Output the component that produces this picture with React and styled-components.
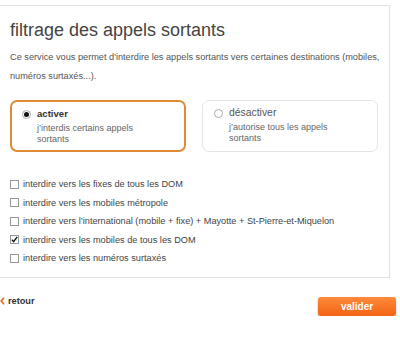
import React, { useState } from 'react';
import styled, { createGlobalStyle } from 'styled-components';

const Global = createGlobalStyle`
    body {
        margin: 0;
        background: #fff;
        font-family: "Liberation Sans", Arial, sans-serif;
        color: #444;
    }
`;

const Panel = styled.div`
    margin-top: 5px;
    width: 390px;
    height: 273px;
    border: 1px solid #e2e2e2;
    border-left: none;
    padding: 12px 0 0 10px;
    box-sizing: border-box;
`;

const Title = styled.h1`
    margin: 0;
    font-size: 18px;
    font-weight: normal;
    line-height: 24px;
    color: #444;
`;

const Intro = styled.p`
    margin: 6px 0 0;
    font-size: 9.2px;
    line-height: 19px;
    color: #555;
    width: 378px;
`;

const Choices = styled.div`
    display: flex;
    gap: 16px;
    margin-top: 14px;
`;

const Choice = styled.label`
    width: 176px;
    height: 52px;
    box-sizing: border-box;
    border: ${p => (p.$on ? '2px solid #e08a35' : '1px solid #e4e4e4')};
    border-radius: 7px;
    padding: ${p => (p.$on ? '5px 10px' : '5px 11px')};
    display: flex;
    gap: 6px;
    cursor: pointer;
`;

const Radio = styled.span`
    flex: none;
    width: 9px;
    height: 9px;
    margin-top: 3px;
    border-radius: 50%;
    border: 1px solid #aaa;
    box-sizing: border-box;
    display: flex;
    align-items: center;
    justify-content: center;
    &::after {
        content: '';
        width: 5px;
        height: 5px;
        border-radius: 50%;
        background: ${p => (p.$on ? '#111' : 'transparent')};
    }
`;

const ChoiceText = styled.div`
    display: flex;
    flex-direction: column;
`;

const ChoiceName = styled.span`
    font-size: ${p => (p.$on ? '9.6px' : '10.4px')};
    line-height: 14px;
    font-weight: ${p => (p.$on ? 'bold' : 'normal')};
    color: ${p => (p.$on ? '#333' : '#555')};
`;

const ChoiceDesc = styled.span`
    margin-top: 2px;
    font-size: 9px;
    line-height: 11px;
    color: #666;
    width: 110px;
`;

const Options = styled.ul`
    list-style: none;
    margin: 26px 0 0;
    padding: 0;
    display: flex;
    flex-direction: column;
    gap: 6.5px;
`;

const Option = styled.li`
    display: flex;
    align-items: center;
    gap: 4px;
    font-size: 9.2px;
    line-height: 12px;
    color: #444;
    cursor: pointer;
`;

const Box = styled.span`
    width: 9px;
    height: 9px;
    border: 1px solid #999;
    box-sizing: border-box;
    display: flex;
    align-items: center;
    justify-content: center;
`;

const Footer = styled.div`
    display: flex;
    justify-content: space-between;
    align-items: flex-start;
    width: 396px;
    margin-top: 18px;
`;

const Back = styled.a`
    display: flex;
    align-items: center;
    gap: 3px;
    font-size: 9.2px;
    font-weight: bold;
    color: #333;
    text-decoration: none;
    cursor: pointer;
`;

const Validate = styled.button`
    width: 78px;
    height: 19px;
    margin-top: 1px;
    border: none;
    border-radius: 3px;
    background: linear-gradient(#ff8a3a, #f26414);
    box-shadow: 0 1px 2px rgba(0, 0, 0, 0.35);
    color: #fff;
    font-family: inherit;
    font-size: 10px;
    font-weight: bold;
    padding: 0;
    cursor: pointer;
`;

const options = [
    'interdire vers les fixes de tous les DOM',
    'interdire vers les mobiles métropole',
    'interdire vers l\u2019international (mobile + fixe) + Mayotte + St-Pierre-et-Miquelon',
    'interdire vers les mobiles de tous les DOM',
    'interdire vers les numéros surtaxés',
];

const choices = [
    { name: 'activer', desc: 'j\u2019interdis certains appels sortants' },
    { name: 'désactiver', desc: 'j\u2019autorise tous les appels sortants' },
];

function App() {
    const [active, setActive] = useState(0);
    const [checked, setChecked] = useState([false, false, false, true, false]);

    const toggle = i => setChecked(checked.map((c, j) => (j === i ? !c : c)));

    return (
        <>
            <Global />
            <Panel>
                <Title>filtrage des appels sortants</Title>
                <Intro>
                    Ce service vous permet d'interdire les appels sortants vers certaines destinations (mobiles,
                    numéros surtaxés...).
                </Intro>
                <Choices>
                    {choices.map((c, i) => (
                        <Choice key={c.name} $on={active === i} onClick={() => setActive(i)}>
                            <Radio $on={active === i} />
                            <ChoiceText>
                                <ChoiceName $on={active === i}>{c.name}</ChoiceName>
                                <ChoiceDesc>{c.desc}</ChoiceDesc>
                            </ChoiceText>
                        </Choice>
                    ))}
                </Choices>
                <Options>
                    {options.map((o, i) => (
                        <Option key={o} onClick={() => toggle(i)}>
                            <Box>
                                {checked[i] && (
                                    <svg width="7" height="7" viewBox="0 0 7 7">
                                        <path d="M0.8 3.6 L2.6 5.6 L6.2 0.8" fill="none" stroke="#111" strokeWidth="1.4" />
                                    </svg>
                                )}
                            </Box>
                            {o}
                        </Option>
                    ))}
                </Options>
            </Panel>
            <Footer>
                <Back>
                    <svg width="5" height="8" viewBox="0 0 5 8">
                        <path d="M4 0.8 L1.2 4 L4 7.2" fill="none" stroke="#f26414" strokeWidth="1.6" />
                    </svg>
                    retour
                </Back>
                <Validate>valider</Validate>
            </Footer>
        </>
    );
}

export default App;
